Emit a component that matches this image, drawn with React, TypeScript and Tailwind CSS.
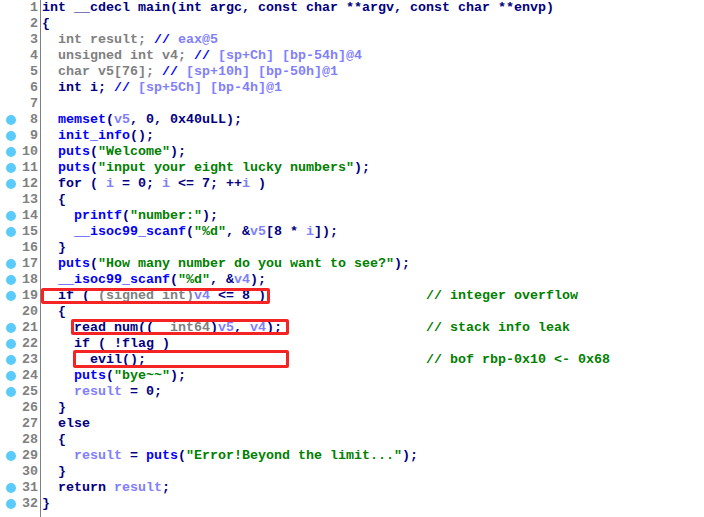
import React from 'react';

type Tok = [string, string];

const K = 'text-[#000080]';
const F = 'text-[#0000ff]';
const V = 'text-[#8080ff]';
const S = 'text-[#008000]';
const G = 'text-[#808080]';

const k = (t: string): Tok => [t, K];
const f = (t: string): Tok => [t, F];
const v = (t: string): Tok => [t, V];
const s = (t: string): Tok => [t, S];
const g = (t: string): Tok => [t, G];

// pad code to column 48 and append a trailing comment
const withComment = (toks: Tok[], comment: string): Tok[] => {
  const len = toks.reduce((n, [t]) => n + t.length, 0);
  return [...toks, k(' '.repeat(Math.max(1, 48 - len))), s(comment)];
};

const lines: { dot: boolean; toks: Tok[] }[] = [
  { dot: false, toks: [k('int __cdecl main(int argc, const char **argv, const char **envp)')] },
  { dot: false, toks: [k('{')] },
  { dot: false, toks: [g('  int result; '), f('//'), v(' eax@5')] },
  { dot: false, toks: [g('  unsigned int v4; '), f('//'), v(' [sp+Ch] [bp-54h]@4')] },
  { dot: false, toks: [g('  char v5[76]; '), f('//'), v(' [sp+10h] [bp-50h]@1')] },
  { dot: false, toks: [k('  int i; '), f('//'), v(' [sp+5Ch] [bp-4h]@1')] },
  { dot: false, toks: [] },
  { dot: true, toks: [k('  '), f('memset'), k('('), v('v5'), k(', 0, 0x40uLL);')] },
  { dot: true, toks: [k('  '), f('init_info'), k('();')] },
  { dot: true, toks: [k('  '), f('puts'), k('('), s('"Welcome"'), k(');')] },
  { dot: true, toks: [k('  '), f('puts'), k('('), s('"input your eight lucky numbers"'), k(');')] },
  { dot: true, toks: [k('  for ( '), v('i'), k(' = 0; '), v('i'), k(' <= 7; ++'), v('i'), k(' )')] },
  { dot: false, toks: [k('  {')] },
  { dot: true, toks: [k('    '), f('printf'), k('('), s('"number:"'), k(');')] },
  { dot: true, toks: [k('    '), f('__isoc99_scanf'), k('('), s('"%d"'), k(', &'), v('v5'), k('[8 * '), v('i'), k(']);')] },
  { dot: false, toks: [k('  }')] },
  { dot: true, toks: [k('  '), f('puts'), k('('), s('"How many number do you want to see?"'), k(');')] },
  { dot: true, toks: [k('  '), f('__isoc99_scanf'), k('('), s('"%d"'), k(', &'), v('v4'), k(');')] },
  { dot: true, toks: withComment([k('  if ( '), g('(signed int)'), v('v4'), k(' <= 8 )')], '// integer overflow') },
  { dot: false, toks: [k('  {')] },
  { dot: true, toks: withComment([k('    read_num(('), g('__int64'), k(')'), v('v5'), k(', '), v('v4'), k(');')], '// stack info leak') },
  { dot: true, toks: [k('    if ( !flag )')] },
  { dot: true, toks: withComment([k('      evil();')], '// bof rbp-0x10 <- 0x68') },
  { dot: true, toks: [k('    '), f('puts'), k('('), s('"bye~~"'), k(');')] },
  { dot: true, toks: [k('    '), v('result'), k(' = 0;')] },
  { dot: false, toks: [k('  }')] },
  { dot: false, toks: [k('  else')] },
  { dot: false, toks: [k('  {')] },
  { dot: true, toks: [k('    '), v('result'), k(' = '), f('puts'), k('('), s('"Error!Beyond the limit..."'), k(');')] },
  { dot: false, toks: [k('  }')] },
  { dot: true, toks: [k('  return '), v('result'), k(';')] },
  { dot: true, toks: [k('}')] },
];

export default function App() {
  return (
    <div className="relative h-[517px] w-[704px] overflow-hidden bg-white font-['Liberation_Mono',monospace] text-[13.33px] font-bold leading-4">
      <div className="flex h-full">
        <div className="h-full w-[41px] shrink-0 border-r border-[#808080]">
          {lines.map((l, i) => (
            <div key={i} className="flex h-4 items-center justify-between pl-[6px] pr-[2px] text-[#808080]">
              <span className={l.dot ? 'h-[10px] w-[10px] rounded-full bg-[#5ccbfa]' : 'w-[10px]'} />
              <span>{i + 1}</span>
            </div>
          ))}
        </div>
        <div className="pl-[1px]">
          {lines.map((l, i) => (
            <div key={i} className="h-4 whitespace-pre">
              {l.toks.map(([t, c], j) => (
                <span key={j} className={c}>{t}</span>
              ))}
            </div>
          ))}
        </div>
      </div>
      {/* annotation boxes drawn over the listing */}
      <div className="absolute left-[41px] top-[288px] h-[16px] w-[229px] rounded-[2px] border-[3px] border-[#f42424]" />
      <div className="absolute left-[71px] top-[319px] h-[16px] w-[218px] rounded-[2px] border-[3px] border-[#f42424]" />
      <div className="absolute left-[73px] top-[350px] h-[18px] w-[216px] rounded-[2px] border-[3px] border-[#f42424]" />
    </div>
  );
}
